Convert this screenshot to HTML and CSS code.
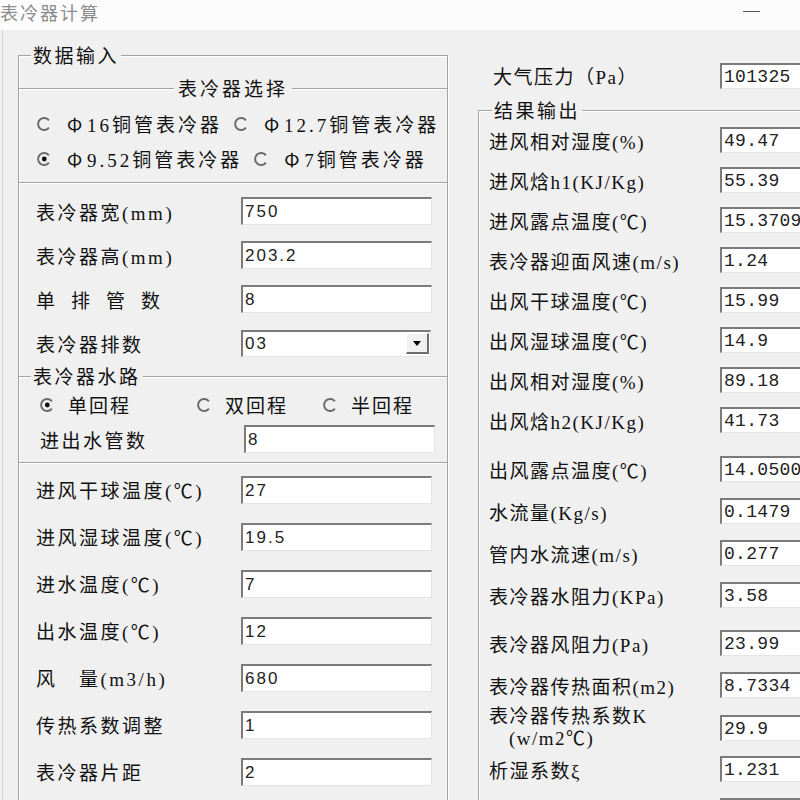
FILE: index.html
```html
<!DOCTYPE html>
<html lang="zh-CN">
<head>
<meta charset="utf-8">
<title>表冷器计算</title>
<link rel="stylesheet" href="styles.css">
</head>
<body>
<div class="titlebar">
  <span class="title">表冷器计算</span>
  <span class="minimize"></span>
</div>
<div class="client">
  <div class="left">
    <div class="group main">
      <span class="legend">数据输入</span>
      <div class="top-gap"></div>

      <div class="section sel">
        <span class="legend center">表冷器选择</span>
        <div class="radio-row">
          <label class="radio"><svg class="rb" width="14" height="14" viewBox="0 0 14 14"><path d="M11.9 3.4A6 6 0 1 0 11.9 10.6" fill="none" stroke="#6a6a6a" stroke-width="1.9"/></svg><span class="rtext"><span class="phi">Φ</span>16铜管表冷器</span></label>
          <label class="radio"><svg class="rb" width="14" height="14" viewBox="0 0 14 14"><path d="M11.9 3.4A6 6 0 1 0 11.9 10.6" fill="none" stroke="#6a6a6a" stroke-width="1.9"/></svg><span class="rtext"><span class="phi">Φ</span>12.7铜管表冷器</span></label>
        </div>
        <div class="radio-row">
          <label class="radio"><svg class="rb" width="14" height="14" viewBox="0 0 14 14"><path d="M11.9 3.4A6 6 0 1 0 11.9 10.6" fill="none" stroke="#6a6a6a" stroke-width="1.9"/><circle cx="7.3" cy="7" r="2.4" fill="#111"/></svg><span class="rtext"><span class="phi">Φ</span>9.52铜管表冷器</span></label>
          <label class="radio"><svg class="rb" width="14" height="14" viewBox="0 0 14 14"><path d="M11.9 3.4A6 6 0 1 0 11.9 10.6" fill="none" stroke="#6a6a6a" stroke-width="1.9"/></svg><span class="rtext"><span class="phi">Φ</span>7铜管表冷器</span></label>
        </div>
      </div>

      <div class="section inputs1">
        <div class="frow"><span class="lbl">表冷器宽(mm)</span><input class="field" type="text" value="750"></div>
        <div class="frow"><span class="lbl">表冷器高(mm)</span><input class="field" type="text" value="203.2"></div>
        <div class="frow"><span class="lbl spaced">单排管数</span><input class="field" type="text" value="8"></div>
        <div class="frow"><span class="lbl">表冷器排数</span>
          <div class="combo"><span class="combo-val">03</span><span class="combo-btn"><span class="tri"></span></span></div>
        </div>
      </div>

      <div class="section water">
        <span class="legend">表冷器水路</span>
        <div class="wrow">
          <label class="radio w"><svg class="rb" width="14" height="14" viewBox="0 0 14 14"><path d="M11.9 3.4A6 6 0 1 0 11.9 10.6" fill="none" stroke="#6a6a6a" stroke-width="1.9"/><circle cx="7.3" cy="7" r="2.4" fill="#111"/></svg><span class="rtext">单回程</span></label>
          <label class="radio w"><svg class="rb" width="14" height="14" viewBox="0 0 14 14"><path d="M11.9 3.4A6 6 0 1 0 11.9 10.6" fill="none" stroke="#6a6a6a" stroke-width="1.9"/></svg><span class="rtext">双回程</span></label>
          <label class="radio w"><svg class="rb" width="14" height="14" viewBox="0 0 14 14"><path d="M11.9 3.4A6 6 0 1 0 11.9 10.6" fill="none" stroke="#6a6a6a" stroke-width="1.9"/></svg><span class="rtext">半回程</span></label>
        </div>
        <div class="frow pipes"><span class="lbl">进出水管数</span><input class="field" type="text" value="8"></div>
      </div>

      <div class="section inputs2">
        <div class="frow tall"><span class="lbl">进风干球温度(℃)</span><input class="field" type="text" value="27"></div>
        <div class="frow tall"><span class="lbl">进风湿球温度(℃)</span><input class="field" type="text" value="19.5"></div>
        <div class="frow tall"><span class="lbl">进水温度(℃)</span><input class="field" type="text" value="7"></div>
        <div class="frow tall"><span class="lbl">出水温度(℃)</span><input class="field" type="text" value="12"></div>
        <div class="frow tall"><span class="lbl">风　量(m3/h)</span><input class="field" type="text" value="680"></div>
        <div class="frow tall"><span class="lbl">传热系数调整</span><input class="field" type="text" value="1"></div>
        <div class="frow tall"><span class="lbl">表冷器片距</span><input class="field" type="text" value="2"></div>
      </div>
    </div>
  </div>

  <div class="right">
    <div class="atm"><span class="rlbl">大气压力（Pa）</span><input class="field out" type="text" value="101325"></div>
    <div class="result">
      <span class="legend">结果输出</span>
      <div class="rrow"><span class="rlbl">进风相对湿度(%)</span><input class="field out" type="text" value="49.47"></div>
      <div class="rrow"><span class="rlbl">进风焓h1(KJ/Kg)</span><input class="field out" type="text" value="55.39"></div>
      <div class="rrow"><span class="rlbl">进风露点温度(℃)</span><input class="field out" type="text" value="15.3709"></div>
      <div class="rrow"><span class="rlbl">表冷器迎面风速(m/s)</span><input class="field out" type="text" value="1.24"></div>
      <div class="rrow"><span class="rlbl">出风干球温度(℃)</span><input class="field out" type="text" value="15.99"></div>
      <div class="rrow"><span class="rlbl">出风湿球温度(℃)</span><input class="field out" type="text" value="14.9"></div>
      <div class="rrow"><span class="rlbl">出风相对湿度(%)</span><input class="field out" type="text" value="89.18"></div>
      <div class="rrow gap8"><span class="rlbl">出风焓h2(KJ/Kg)</span><input class="field out" type="text" value="41.73"></div>
      <div class="rrow b"><span class="rlbl">出风露点温度(℃)</span><input class="field out" type="text" value="14.0500"></div>
      <div class="rrow b"><span class="rlbl">水流量(Kg/s)</span><input class="field out" type="text" value="0.1479"></div>
      <div class="rrow b"><span class="rlbl">管内水流速(m/s)</span><input class="field out" type="text" value="0.277"></div>
      <div class="rrow b gap6"><span class="rlbl">表冷器水阻力(KPa)</span><input class="field out" type="text" value="3.58"></div>
      <div class="rrow b"><span class="rlbl">表冷器风阻力(Pa)</span><input class="field out" type="text" value="23.99"></div>
      <div class="rrow b"><span class="rlbl">表冷器传热面积(m2)</span><input class="field out" type="text" value="8.7334"></div>
      <div class="rrow b"><span class="rlbl two">表冷器传热系数K<br><span class="indent">(w/m2℃)</span></span><input class="field out" type="text" value="29.9"></div>
      <div class="rrow b"><span class="rlbl">析湿系数ξ</span><input class="field out" type="text" value="1.231"></div>
      <div class="rrow b"><span class="rlbl"></span><input class="field out" type="text" value=""></div>
    </div>
  </div>
</div>
</body>
</html>
```
FILE: styles.css
```css
* { box-sizing: border-box; }
html, body { margin: 0; padding: 0; }
body {
  width: 800px;
  height: 800px;
  overflow: hidden;
  background: #f0f0f0;
  font-family: "Liberation Serif", "Noto Sans CJK SC", serif;
  font-size: 19px;
  color: #111;
}

/* title bar */
.titlebar {
  height: 30px;
  background: #fcfcfc;
  display: flex;
  justify-content: space-between;
  align-items: flex-start;
}
.title {
  font-family: "Noto Sans CJK SC", sans-serif;
  font-size: 18px;
  line-height: 24px;
  letter-spacing: 2px;
  color: #8c8c8c;
}
.minimize {
  width: 17px;
  height: 1px;
  background: #555;
  margin: 11px 40px 0 0;
}

/* client area */
.client {
  display: flex;
  height: 770px;
  margin-left: 2px;
  border-left: 1px solid #d4d4d4;
  padding-left: 15px;
}
.left {
  width: 430px;
  flex: none;
  padding-top: 25px;
}
.right {
  flex: 1;
  min-width: 0;
  padding-top: 32px;
}

/* group boxes */
.group {
  position: relative;
  border: 1px solid #a3a3a3;
  box-shadow: inset 1px 1px 0 #fff, 1px 1px 0 #fff;
}
.group.main { height: 760px; }
.legend {
  position: absolute;
  top: -12px;
  left: 12px;
  padding: 0 2px;
  background: #f0f0f0;
  font-family: "Noto Sans CJK SC", sans-serif;
  line-height: 22px;
  letter-spacing: 2.5px;
  white-space: nowrap;
}
.legend.center {
  left: 50%;
  transform: translateX(-50%);
  letter-spacing: 3px;
  padding: 0 4px;
}
.top-gap { height: 32px; }

.section { position: relative; }
.sel {
  height: 95px;
  border-top: 1px solid #a3a3a3;
  border-bottom: 1px solid #a3a3a3;
  box-shadow: inset 0 1px 0 #fff, 0 1px 0 #fff;
  padding-top: 17px;
}
.inputs1 {
  height: 193px;
  padding-top: 6px;
}
.water {
  height: 87px;
  border-top: 1px solid #a3a3a3;
  border-bottom: 1px solid #a3a3a3;
  box-shadow: inset 0 1px 0 #fff, 0 1px 0 #fff;
  padding-top: 14px;
}
.inputs2 { padding-top: 3px; }

/* radios */
.radio-row {
  display: flex;
  align-items: center;
  height: 35px;
  padding-left: 18px;
  gap: 12px;
}
.radio {
  display: flex;
  align-items: center;
  gap: 16px;
  white-space: nowrap;
}
.rb { flex: none; }
.rtext { letter-spacing: 3px; }
.phi {
  display: inline-block;
  width: 20px;
  font-family: "Noto Sans CJK SC", sans-serif;
}
.wrow {
  display: grid;
  grid-template-columns: 157px 126px auto;
  align-items: center;
  height: 26px;
  padding-left: 21px;
}
.radio.w { gap: 14px; }
.radio.w .rtext { letter-spacing: 2px; }

/* form rows */
.frow {
  display: grid;
  grid-template-columns: 205px 191px;
  align-items: center;
  height: 44px;
  padding-left: 17px;
}
.frow.tall { height: 47px; }
.frow.pipes {
  height: 36px;
  margin-top: 4px;
  padding-left: 21px;
  grid-template-columns: 204px 191px;
}
.lbl { letter-spacing: 2.5px; white-space: nowrap; }
.lbl.spaced { letter-spacing: 16px; }

.field {
  display: block;
  width: 191px;
  height: 28px;
  margin: 0;
  border-style: solid;
  border-width: 2px 1px 1px 2px;
  border-color: #7b7b7b #e4e4e4 #e4e4e4 #7b7b7b;
  background: #fff;
  font-family: "Liberation Sans", sans-serif;
  font-size: 17px;
  letter-spacing: 2px;
  color: #222;
  padding: 1px 0 0 2px;
  outline: none;
}

/* combo box */
.combo {
  display: flex;
  align-items: center;
  width: 190px;
  height: 27px;
  border-style: solid;
  border-width: 2px 1px 1px 2px;
  border-color: #7b7b7b #e4e4e4 #e4e4e4 #7b7b7b;
  background: #fff;
  font-family: "Liberation Sans", sans-serif;
  font-size: 17px;
  letter-spacing: 2px;
  color: #222;
}
.combo-val { flex: 1; padding-left: 2px; }
.combo-btn {
  display: flex;
  align-items: center;
  justify-content: center;
  width: 23px;
  height: 21px;
  margin-right: 1px;
  border-style: solid;
  border-width: 1px 2px 2px 1px;
  border-color: #fff #6e6e6e #6e6e6e #fff;
  background: #f0f0f0;
}
.tri {
  width: 0;
  height: 0;
  border-left: 4px solid transparent;
  border-right: 4px solid transparent;
  border-top: 5px solid #000;
}

/* right column */
.atm {
  display: grid;
  grid-template-columns: 227px 110px;
  align-items: center;
  height: 26px;
  padding-left: 45px;
}
.result {
  position: relative;
  margin-top: 22px;
  margin-left: 30px;
  height: 700px;
  border-top: 1px solid #a3a3a3;
  border-left: 1px solid #a3a3a3;
  box-shadow: inset 1px 1px 0 #fff;
  padding-top: 9px;
}
.result .legend { left: 13px; }
.rrow {
  display: grid;
  grid-template-columns: 231px 110px;
  align-items: center;
  height: 40px;
  padding-left: 10px;
}
.rrow.b { height: 42px; }
.rrow.gap8 { margin-bottom: 8px; }
.rrow.gap6 { margin-bottom: 6px; }
.rlbl { letter-spacing: 1.5px; white-space: nowrap; }
.rlbl.two { line-height: 22px; }
.indent { padding-left: 20px; }

.field.out {
  width: 110px;
  height: 26px;
  font-family: "Liberation Mono", monospace;
  font-size: 18px;
  letter-spacing: 0.3px;
}
```
